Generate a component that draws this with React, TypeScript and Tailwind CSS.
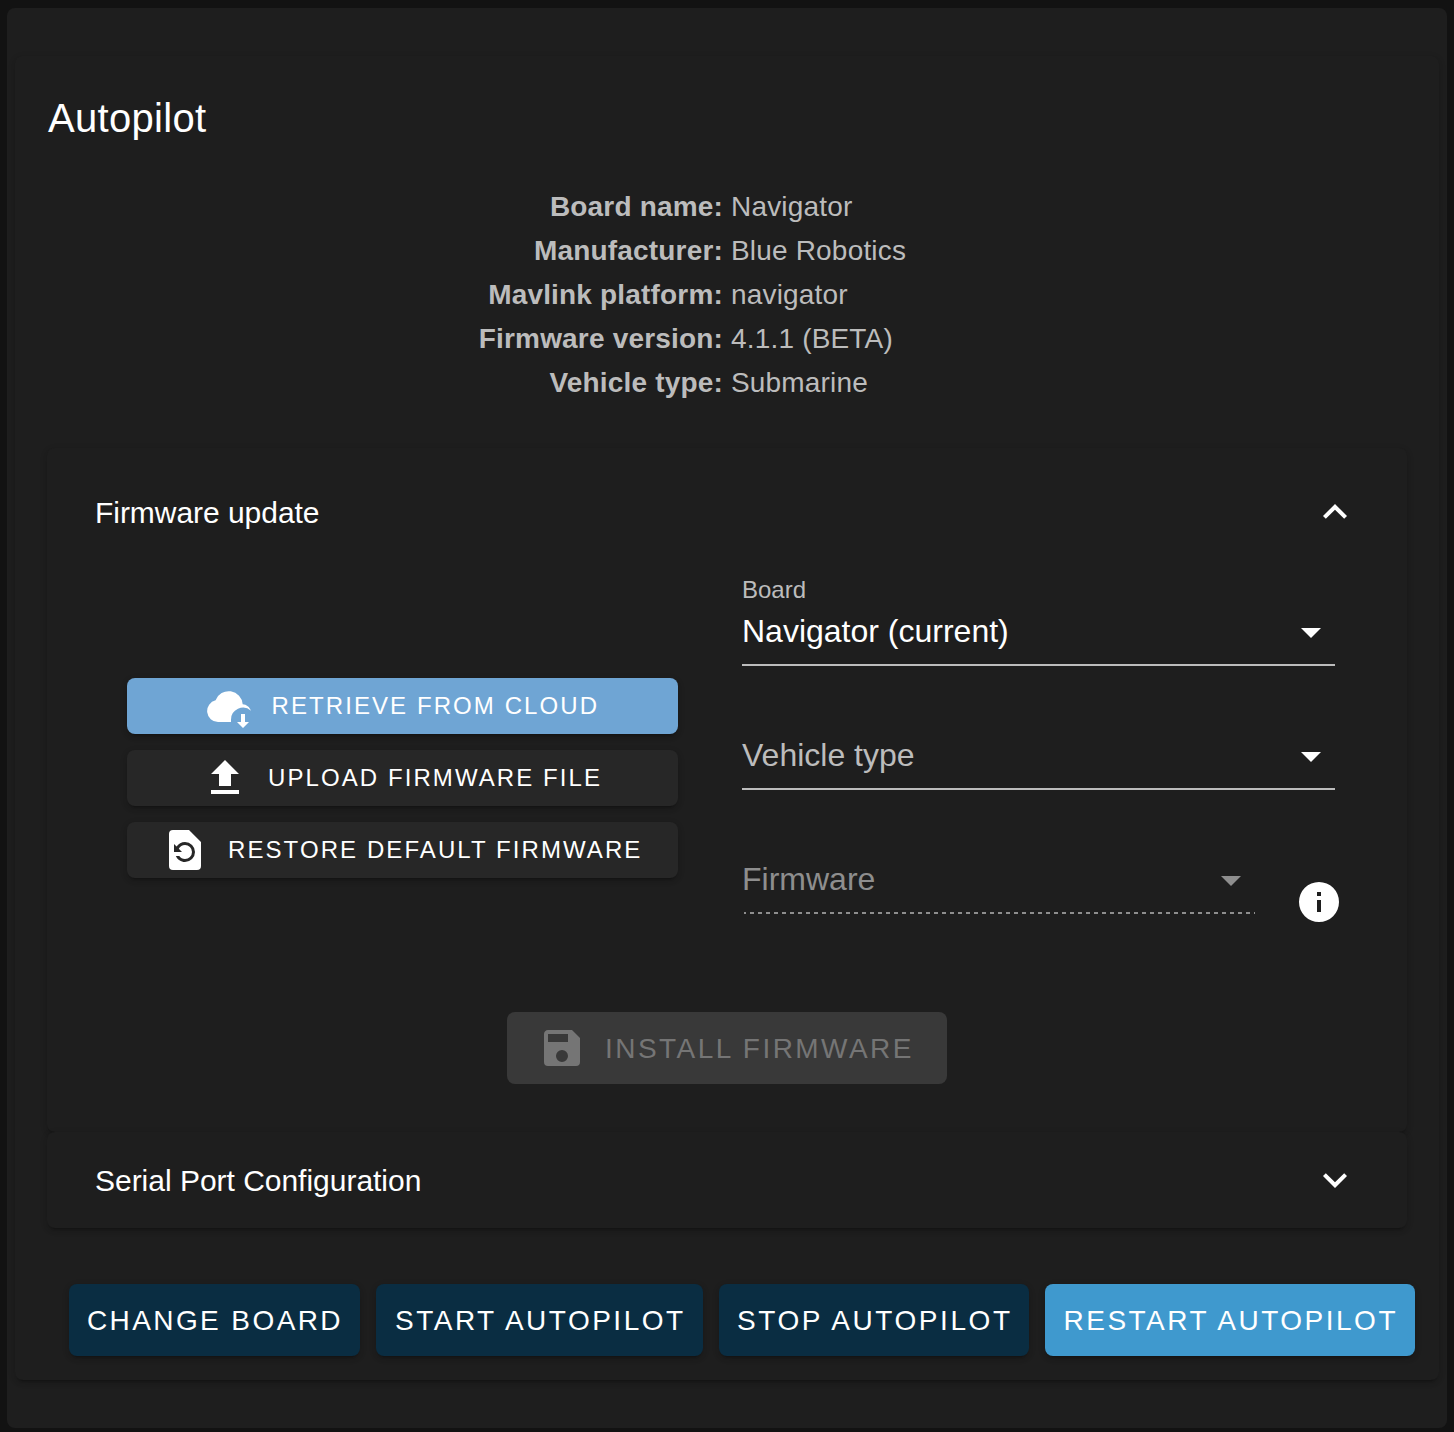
import type { ReactNode } from 'react';

const ELEVATION =
  'shadow-[0_5px_2px_-4px_rgba(0,0,0,0.2),0_3px_4px_rgba(0,0,0,0.14),0_2px_8px_rgba(0,0,0,0.08)]';

const ICONS = {
  chevronUp: 'M7.41,15.41L12,10.83L16.59,15.41L18,14L12,8L6,14L7.41,15.41Z',
  chevronDown: 'M7.41,8.58L12,13.17L16.59,8.58L18,10L12,16L6,10L7.41,8.58Z',
  menuDown: 'M7,10L12,15L17,10H7Z',
  upload: 'M9,16V10H5L12,3L19,10H15V16H9M5,20V18H19V20H5Z',
  restore:
    'M14,2H6A2,2 0 0,0 4,4V20A2,2 0 0,0 6,22H18A2,2 0 0,0 20,20V8L14,2M12,18C9.95,18 8.19,16.76 7.42,15H9.13C9.76,15.9 10.81,16.5 12,16.5A3.5,3.5 0 0,0 15.5,13A3.5,3.5 0 0,0 12,9.5C10.65,9.5 9.5,10.28 8.9,11.4L10.5,13H6.5V9L7.8,10.3C8.69,8.92 10.23,8 12,8A5,5 0 0,1 17,13A5,5 0 0,1 12,18Z',
  save: 'M15,9H5V5H15M12,19A3,3 0 0,1 9,16A3,3 0 0,1 12,13A3,3 0 0,1 15,16A3,3 0 0,1 12,19M17,3H5C3.89,3 3,3.9 3,5V19A2,2 0 0,0 5,21H19A2,2 0 0,0 21,19V7L17,3Z',
  info: 'M13,9H11V7H13M13,17H11V11H13M12,2A10,10 0 0,0 2,12A10,10 0 0,0 12,22A10,10 0 0,0 22,12A10,10 0 0,0 12,2Z',
};

function Icon({ name, className = '' }: { name: keyof typeof ICONS; className?: string }) {
  return (
    <svg viewBox="0 0 24 24" className={`size-12 shrink-0 fill-current ${className}`}>
      <path d={ICONS[name]} />
    </svg>
  );
}

function CloudIcon() {
  return (
    <svg viewBox="0 0 44 38" className="mt-1.5 h-[38px] w-11 shrink-0 fill-current">
      <path d="M11 32A11 11 0 0 1 8.6 10.3A14 14 0 0 1 35.7 14.3C39.5 14.6 42.6 17 44 20.8A12 12 0 0 0 24 30V32Z" />
      <path d="M34 24H38V32H42L36 38L30 32H34Z" />
    </svg>
  );
}

const info = [
  ['Board name:', 'Navigator'],
  ['Manufacturer:', 'Blue Robotics'],
  ['Mavlink platform:', 'navigator'],
  ['Firmware version:', '4.1.1 (BETA)'],
  ['Vehicle type:', 'Submarine'],
];

function SourceButton({ className, children }: { className: string; children: ReactNode }) {
  return (
    <button
      className={`flex h-14 w-full items-center rounded-lg text-2xl tracking-[2.08px] whitespace-nowrap ${ELEVATION} ${className}`}
    >
      {children}
    </button>
  );
}

function ActionButton({ className, children }: { className: string; children: ReactNode }) {
  return (
    <button
      className={`h-[72px] rounded-lg pt-0.5 text-left text-[28px] whitespace-nowrap ${ELEVATION} ${className}`}
    >
      {children}
    </button>
  );
}

export default function App() {
  return (
    <div className="h-[1432px] w-[1454px] overflow-hidden bg-[#121212] pt-2 pl-[7px] font-['Liberation_Sans',Arial,sans-serif] text-white">
      <div className="h-[1420px] w-[1440px] rounded-lg bg-[#1e1e1e] px-2 pt-12">
        <main className={`h-[1324px] rounded-lg px-8 pt-8 ${ELEVATION}`}>
          <h1 className="h-16 pl-px text-[40px] leading-[60px] tracking-[0.3px]">Autopilot</h1>

          <dl className="mt-[33px] grid grid-cols-[676px_1fr] gap-x-2 text-[28px] leading-[44px] tracking-[0.18px] text-[#bcbcbc]">
            {info.map(([label, value]) => (
              <div key={label} className="contents">
                <dt className="text-right font-bold">{label}</dt>
                <dd>{value}</dd>
              </div>
            ))}
          </dl>

          <section className={`mt-[43px] h-[684px] rounded-lg bg-[#1e1e1e] ${ELEVATION}`}>
            <header className="flex h-32 items-center justify-between pr-12 pl-12 text-[30px]">
              <span className="tracking-[-0.04px]">Firmware update</span>
              <Icon name="chevronUp" />
            </header>

            <div className="flex h-[340px] pl-20">
              <div className="flex w-[551px] flex-col gap-4 pt-[102px]">
                <SourceButton className="bg-[#6fa5d4] pl-20">
                  <CloudIcon />
                  <span className="ml-[20.5px]">RETRIEVE FROM CLOUD</span>
                </SourceButton>
                <SourceButton className="bg-[#272727] pl-[74px]">
                  <Icon name="upload" />
                  <span className="ml-[19px]">UPLOAD FIRMWARE FILE</span>
                </SourceButton>
                <SourceButton className="bg-[#272727] pl-[34px]">
                  <Icon name="restore" />
                  <span className="ml-[19px]">RESTORE DEFAULT FIRMWARE</span>
                </SourceButton>
              </div>

              <div className="ml-16 w-[601px]">
                <div className="h-[90px] w-[593px] border-b-2 border-[#bcbcbc]">
                  <div className="h-8 text-2xl leading-[28px] text-[#bcbcbc]">Board</div>
                  <div className="flex h-12 items-start justify-between text-[32px]">
                    <span className="leading-[46px]">Navigator (current)</span>
                    <Icon name="menuDown" />
                  </div>
                </div>
                <div className="mt-[66px] flex h-[58px] w-[593px] items-start justify-between border-b-2 border-[#bcbcbc] text-[32px] text-[#bcbcbc]">
                  <span className="leading-[46px]">Vehicle type</span>
                  <Icon name="menuDown" className="text-white" />
                </div>
                <div className="mt-[66px] flex justify-between text-[32px] text-[#8e8e8e]">
                  <div className="w-[513px]">
                    <div className="flex h-14 items-start justify-between">
                      <span className="leading-[46px]">Firmware</span>
                      <Icon name="menuDown" />
                    </div>
                    <div className="ml-0.5 h-0.5 bg-[repeating-linear-gradient(to_right,#8e8e8e_0px,#8e8e8e_2px,transparent_2px,transparent_6px,#8e8e8e_6px,#8e8e8e_8px)]" />
                  </div>
                  <Icon name="info" className="mt-[22px] text-white" />
                </div>
              </div>
            </div>

            <div className="mt-24 flex justify-center">
              <button
                disabled
                className="flex h-[72px] w-[440px] items-center rounded-lg bg-[#393939] pl-[31px] text-[28px] tracking-[2.45px] whitespace-nowrap text-[#757575]"
              >
                <Icon name="save" />
                <span className="mt-0.5 ml-[19px]">INSTALL FIRMWARE</span>
              </button>
            </div>
          </section>

          <section
            className={`flex h-24 items-center justify-between rounded-lg bg-[#1e1e1e] px-12 text-[30px] ${ELEVATION}`}
          >
            <span className="tracking-[-0.02px]">Serial Port Configuration</span>
            <Icon name="chevronDown" />
          </section>

          <footer className="mt-14 -mr-2 flex justify-end gap-4">
            <ActionButton className="w-[291px] bg-[#0a2d42] pl-[18px] tracking-[2.4px]">CHANGE BOARD</ActionButton>
            <ActionButton className="w-[327px] bg-[#0a2d42] pl-[19px] tracking-[2.5px]">START AUTOPILOT</ActionButton>
            <ActionButton className="w-[310px] bg-[#0a2d42] pl-[18px] tracking-[2.57px]">STOP AUTOPILOT</ActionButton>
            <ActionButton className="w-[370px] bg-[#3f99ce] pl-[18.5px] tracking-[2.5px]">RESTART AUTOPILOT</ActionButton>
          </footer>
        </main>
      </div>
    </div>
  );
}
